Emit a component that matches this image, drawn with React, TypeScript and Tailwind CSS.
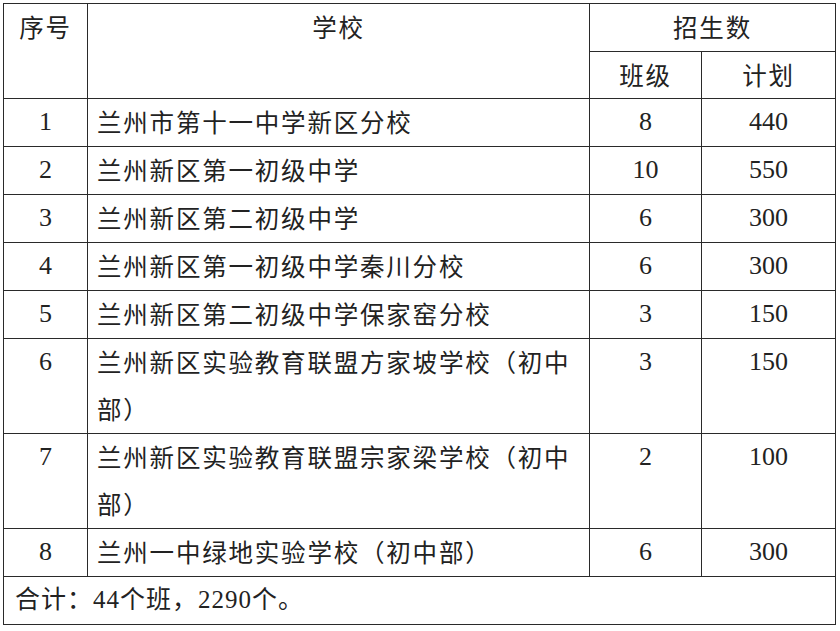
import React from "react";

const rows: { n: string; lines: string[]; c: string; p: string }[] = [
  { n: "1", lines: ["兰州市第十一中学新区分校"], c: "8", p: "440" },
  { n: "2", lines: ["兰州新区第一初级中学"], c: "10", p: "550" },
  { n: "3", lines: ["兰州新区第二初级中学"], c: "6", p: "300" },
  { n: "4", lines: ["兰州新区第一初级中学秦川分校"], c: "6", p: "300" },
  { n: "5", lines: ["兰州新区第二初级中学保家窑分校"], c: "3", p: "150" },
  { n: "6", lines: ["兰州新区实验教育联盟方家坡学校（初中", "部）"], c: "3", p: "150" },
  { n: "7", lines: ["兰州新区实验教育联盟宗家梁学校（初中", "部）"], c: "2", p: "100" },
  { n: "8", lines: ["兰州一中绿地实验学校（初中部）"], c: "6", p: "300" },
];

const cjk = "text-[24.5px] tracking-[1.8px] font-['Noto_Sans_CJK_SC',sans-serif]";
const num = "text-[26px] font-['Liberation_Serif','Noto_Sans_CJK_SC',serif]";
const cell = "border-[1.5px] border-[#2a2a2a] align-top p-0 leading-[46px]";

export default function App() {
  return (
    <div className="w-[840px] h-[631px] bg-white pt-[3px] pl-[3px] text-[#222]">
      <table className="border-collapse table-fixed w-[832px] border-[1.5px] border-[#666]">
        <colgroup>
          <col className="w-[84px]" />
          <col className="w-[502px]" />
          <col className="w-[112px]" />
          <col className="w-[134px]" />
        </colgroup>
        <tbody>
          <tr className="h-[48px]">
            <td rowSpan={2} className={`${cell} text-center ${cjk}`}>序号</td>
            <td rowSpan={2} className={`${cell} text-center ${cjk}`}>学校</td>
            <td colSpan={2} className={`${cell} text-center ${cjk}`}>招生数</td>
          </tr>
          <tr className="h-[47px]">
            <td className={`${cell} text-center ${cjk}`}>班级</td>
            <td className={`${cell} text-center ${cjk}`}>计划</td>
          </tr>
          {rows.map((r) => (
            <tr key={r.n} className={r.lines.length > 1 ? "h-[95px]" : "h-[48px]"}>
              <td className={`${cell} text-center ${num}`}>{r.n}</td>
              <td className={`${cell} pl-[9px] ${cjk}`}>
                {r.lines.map((l, i) => (
                  <div key={i} className="h-[47px] whitespace-nowrap">{l}</div>
                ))}
              </td>
              <td className={`${cell} text-center ${num}`}>{r.c}</td>
              <td className={`${cell} text-center ${num}`}>{r.p}</td>
            </tr>
          ))}
          <tr className="h-[48px]">
            <td colSpan={4} className={`${cell} pl-[11px] text-[25px] tracking-[1px] font-['Liberation_Serif','Noto_Sans_CJK_SC',serif]`}>
              合计：44个班，2290个。
            </td>
          </tr>
        </tbody>
      </table>
    </div>
  );
}
